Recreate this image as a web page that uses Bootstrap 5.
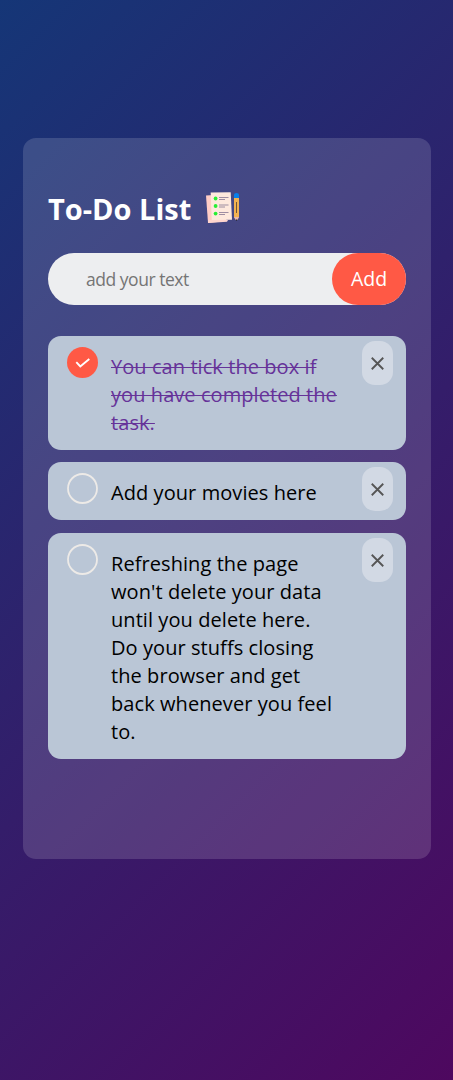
<!DOCTYPE html>
<html lang="en">
<head>
<meta charset="utf-8">
<meta name="viewport" content="width=device-width, initial-scale=1">
<title>To-Do List</title>
<link href="https://cdn.jsdelivr.net/npm/bootstrap@5.3.0/dist/css/bootstrap.min.css" rel="stylesheet">
<style>
body{font-family:"Segoe UI","Open Sans",sans-serif;background:linear-gradient(135deg,#153677,#4e085f);color:#000}
.todo-app{width:408px;height:721px;margin:138px 22px 0 23px;padding:53px 25px 0;background:rgba(255,255,255,.145);border-radius:13px}
.todo-title{font-size:29px;font-weight:700;color:#fff;line-height:36px}
.todo-title span{width:143px;white-space:nowrap}
.entry{height:52px;margin-top:26px;margin-bottom:31px;background:#edeef0;border-radius:30px}
.entry input{min-width:0;background:transparent;padding:0 0 0 38px;font-size:17.5px;letter-spacing:-.47px;color:#555}
.entry input::placeholder{color:#757575;opacity:1}
.entry .btn-add{width:74px;border-radius:40px;background:#ff5945;color:#fff;font-size:19.5px}
.task-list{gap:12.4px}
.task{background:#bac6d6;border-radius:13px;padding:17px 13px 13px 19px;font-size:20px;letter-spacing:.07px;line-height:28px}
.task p{margin-left:13px;white-space:nowrap}
.task .tick{width:31px;height:31px;margin-top:-6px}
.task.done p{color:#663399}
.task .strike{text-decoration:line-through;text-decoration-thickness:1px}
.btn-del{width:31px;height:44px;margin-top:-12px;padding:1px 0 0;border-radius:13px;background:#d2d9e4}
</style>
</head>
<body class="min-vh-100 overflow-hidden">
<main class="todo-app d-flex flex-column">
  <h1 class="todo-title d-flex align-items-start mb-0"><span>To-Do List</span>
    <svg class="flex-shrink-0" style="margin-left:14px" width="36" height="34" viewBox="0 0 36 34">
      <path d="M1 4.500 9 4l13 26-19 2z" fill="#ffcdc6"/><path d="M3 29h20l-1 1.700-19 1.200z" fill="#ffd5cd"/>
      <path d="M5.700 1.500 25.700 1.200 27 28.700 6.700 29z" fill="#fee9dd"/>
      <g fill="#28ef35"><circle cx="10.600" cy="7.500" r="1.900"/><circle cx="10.600" cy="15" r="1.900"/><circle cx="10.600" cy="22.600" r="1.900"/></g>
      <path d="M14 6.500h9.500M14 8.500h6M14 14h9.500M14 16h6M14 21.500h9.500M14 23.500h6" stroke="#94839b" stroke-width=".9"/>
      <path d="M29 3.500q0-1.500 2.500-1.500t2.500 1.500V7h-5z" fill="#087fe9"/>
      <path d="M29 7h5v19l-2 3h-1l-2-3z" fill="#f2b251"/><path d="M31.500 11v11" stroke="#715638"/>
      <path d="M29 26h5l-1.500 3h-2z" fill="#e9b8ad"/><path d="M30.500 28.500h2l-1 1.500z" fill="#222"/>
    </svg>
  </h1>
  <form class="entry d-flex align-items-stretch" onsubmit="return false">
    <input class="border-0 flex-grow-1" type="text" placeholder="add your text" aria-label="Task">
    <button class="btn-add border-0 flex-shrink-0" type="submit">Add</button>
  </form>
  <ul class="task-list list-unstyled d-flex flex-column mb-0">
    <li class="task done d-flex align-items-start">
      <svg class="tick flex-shrink-0" viewBox="0 0 31 31"><circle cx="15.500" cy="15.500" r="15.500" fill="#ff5945"/><path d="m9.300 15.200 4 4.300 9-7.500" fill="none" stroke="#fff" stroke-width="1.900"/></svg>
      <p class="mb-0"><span class="strike">You can tick the box if</span><br><span class="strike">you have completed the</span><br><span class="strike">task.</span></p>
      <button class="btn-del border-0 ms-auto flex-shrink-0 d-flex align-items-center justify-content-center" aria-label="Delete"><svg width="13" height="13" viewBox="0 0 12 12"><path d="m.7.700 10.600 10.600M11.300.700.700 11.300" stroke="#555" stroke-width="1.700"/></svg></button>
    </li>
    <li class="task d-flex align-items-start">
      <svg class="tick flex-shrink-0" viewBox="0 0 31 31"><circle cx="15.500" cy="15.500" r="14.500" fill="none" stroke="#edeae7" stroke-width="1.800"/></svg>
      <p class="mb-0">Add your movies here</p>
      <button class="btn-del border-0 ms-auto flex-shrink-0 d-flex align-items-center justify-content-center" style="margin-bottom:-10px" aria-label="Delete"><svg width="13" height="13" viewBox="0 0 12 12"><path d="m.7.700 10.600 10.600M11.300.700.700 11.300" stroke="#555" stroke-width="1.700"/></svg></button>
    </li>
    <li class="task d-flex align-items-start">
      <svg class="tick flex-shrink-0" viewBox="0 0 31 31"><circle cx="15.500" cy="15.500" r="14.500" fill="none" stroke="#edeae7" stroke-width="1.800"/></svg>
      <p class="mb-0">Refreshing the page<br>won't delete your data<br>until you delete here.<br>Do your stuffs closing<br>the browser and get<br>back whenever you feel<br>to.</p>
      <button class="btn-del border-0 ms-auto flex-shrink-0 d-flex align-items-center justify-content-center" aria-label="Delete"><svg width="13" height="13" viewBox="0 0 12 12"><path d="m.7.700 10.600 10.600M11.300.700.700 11.300" stroke="#555" stroke-width="1.700"/></svg></button>
    </li>
  </ul>
</main>
<script src="https://cdn.jsdelivr.net/npm/bootstrap@5.3.0/dist/js/bootstrap.bundle.min.js"></script>
</body>
</html>
